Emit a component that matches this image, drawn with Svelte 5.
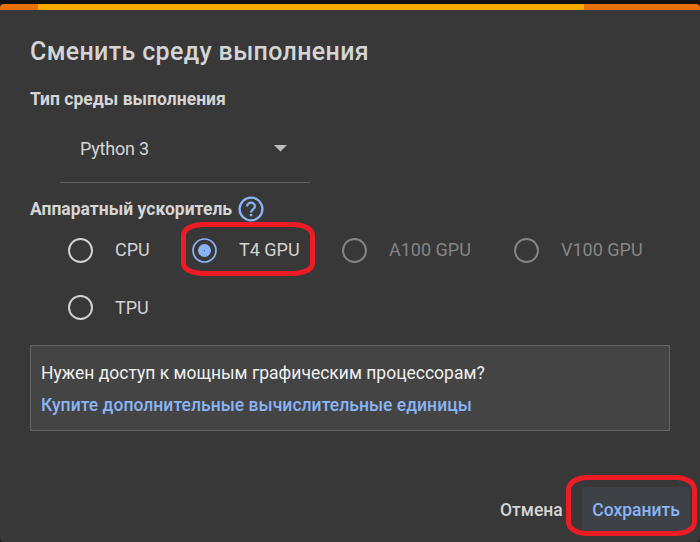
<script>
  let runtime = $state('T4 GPU');
  const rows = [
    [
      { name: 'CPU', width: 124 },
      { name: 'T4 GPU', width: 150 },
      { name: 'A100 GPU', width: 172, disabled: true },
      { name: 'V100 GPU', width: 130, disabled: true }
    ],
    [{ name: 'TPU', width: 124 }]
  ];
</script>

<main class="page">
  <section class="dialog" role="dialog" aria-label="Сменить среду выполнения">
    <div class="stripe"><i class="dark left"></i><i class="amber"></i><i class="dark right"></i></div>
    <h1><span>Сменить среду выполнения</span></h1>
    <h2>Тип среды выполнения</h2>
    <div class="select">
      <span>Python 3</span>
      <svg width="13" height="7" viewBox="0 0 13 7"><path d="M0 0H13L6.5 6.5Z" fill="#bdbdbd" /></svg>
    </div>
    <div class="heading">
      <h2 class="accelerator">Аппаратный ускоритель</h2>
      <svg class="help" width="26" height="26" viewBox="0 0 26 26" fill="none">
        <circle cx="13" cy="13" r="11.4" stroke="#8ab4f8" stroke-width="2.3" />
        <path d="M9.1 10.6C9.1 8.3 10.8 6.7 13 6.7s3.9 1.6 3.9 3.7c0 2.7-3.9 3.1-3.9 6" stroke="#8ab4f8" stroke-width="2.2" />
        <path d="M11.8 17.9h2.5v2.4h-2.5z" fill="#8ab4f8" />
      </svg>
    </div>
    <div class="options">
      {#each rows as row}
        <div class="row">
          {#each row as item}
            <button class="option" class:disabled={item.disabled} class:selected={runtime === item.name} disabled={item.disabled} style="width: {item.width}px" onclick={() => (runtime = item.name)}>
              <svg width="25" height="25" viewBox="0 0 25 25">
                <circle cx="12.5" cy="12.5" r="11.5" fill="none" stroke="currentColor" stroke-width={runtime === item.name ? 1.7 : 2} />
                {#if runtime === item.name}
                  <circle cx="12.5" cy="12.5" r="6.5" fill="currentColor" />
                  <circle cx="12.5" cy="12.5" r=".6" fill="#343c49" />
                {/if}
              </svg>
              <span>{item.name}</span>
            </button>
          {/each}
        </div>
      {/each}
      <svg class="mark choice" width="134" height="55" viewBox="0 0 134 55"><path d="M21 2.5H113Q131.500 4 131.500 14V41Q131.500 50 113 51.500H21Q2.500 50 2.500 41V14Q2.500 4 21 2.500Z" /></svg>
    </div>
    <div class="notice">
      <p><span class="question">Нужен доступ к мощным графическим процессорам?</span></p>
      <p><span class="link">Купите дополнительные вычислительные единицы</span></p>
    </div>
    <footer>
      <button class="cancel">Отмена</button>
      <button class="save">Сохранить</button>
      <svg class="mark confirm" width="131" height="62" viewBox="0 0 131 62"><path d="M20 2.500H111Q128.500 4 128.500 16V46Q128.500 57 111 58.500H20Q2.500 57 2.500 46V16Q2.500 4 20 2.500Z" /></svg>
    </footer>
  </section>
</main>

<style>
  :global(body) { margin: 0; background: #121212; }
  * { box-sizing: border-box; }
  .page { width: 700px; height: 542px; padding-top: 4px; background: #121212; overflow: hidden; font-family: Roboto, sans-serif; color: #d5d5d5; }
  .dialog { height: 538px; display: flex; flex-direction: column; background: #383838; border-radius: 4px; overflow: hidden; }
  .stripe { display: flex; height: 6px; flex: none; }
  .left { width: 38px; }
  .amber { width: 546px; background: #f9ab00; }
  .right { flex: 1; }
  .dark { background: #e8710a; }
  h1, h2, p { margin: 0; white-space: nowrap; }
  h1 { height: 74px; padding: 27px 0 0 30px; font-size: 25px; line-height: 30px; font-weight: 500; letter-spacing: .34px; }
  h2 { height: 30px; padding-left: 30px; font-size: 17.5px; line-height: 30px; font-weight: 700; letter-spacing: 0.02px; }
  .select { width: 250px; height: 69px; margin-left: 60px; padding: 0 23px 0 20px; display: flex; align-items: center; justify-content: space-between; border-bottom: 1px solid #606060; font-size: 18px; letter-spacing: -.2px; }
  .heading { display: flex; height: 42px; flex: none; align-items: center; padding-top: 10px; gap: 6px; }
  .accelerator { width: 232px; line-height: 31px; }
  .options { position: relative; height: 120px; flex: none; }
  .row { display: flex; height: 57px; padding-left: 68px; }
  button { font: inherit; color: inherit; background: none; border: 0; padding: 0; }
  .option { height: 50px; display: flex; align-items: center; gap: 22px; color: #d2d2d2; font-size: 18px; white-space: nowrap; text-align: left; }
  .option svg { flex: none; }
  .row:first-child .option span { padding-bottom: 2px; }
  .selected svg { color: #8ab4f8; }
  .disabled { color: #858585; }
  .mark { position: absolute; fill: none; stroke: #ed1c24; stroke-width: 5; pointer-events: none; }
  .choice { left: 181px; top: -3px; }
  .notice { width: 640px; height: 86px; flex: none; margin-left: 30px; padding: 11px 10px; background: #444; border: 1px solid #646464; color: #f0f0f0; font-size: 17.5px; }
  .notice p { height: 32px; line-height: 32px; }
  .link { color: #8ab4f8; font-weight: 500; letter-spacing: .04px; }
  footer { position: relative; display: flex; justify-content: flex-end; padding: 56px 10px 0 0; font-size: 17.5px; font-weight: 500; }
  .cancel { width: 64px; height: 45px; margin-right: 18px; text-align: left; }
  .save { width: 108px; height: 45px; border-radius: 4px; background: #3e4145; color: #8ab4f8; }
  .confirm { left: 566px; top: 44px; }
</style>
